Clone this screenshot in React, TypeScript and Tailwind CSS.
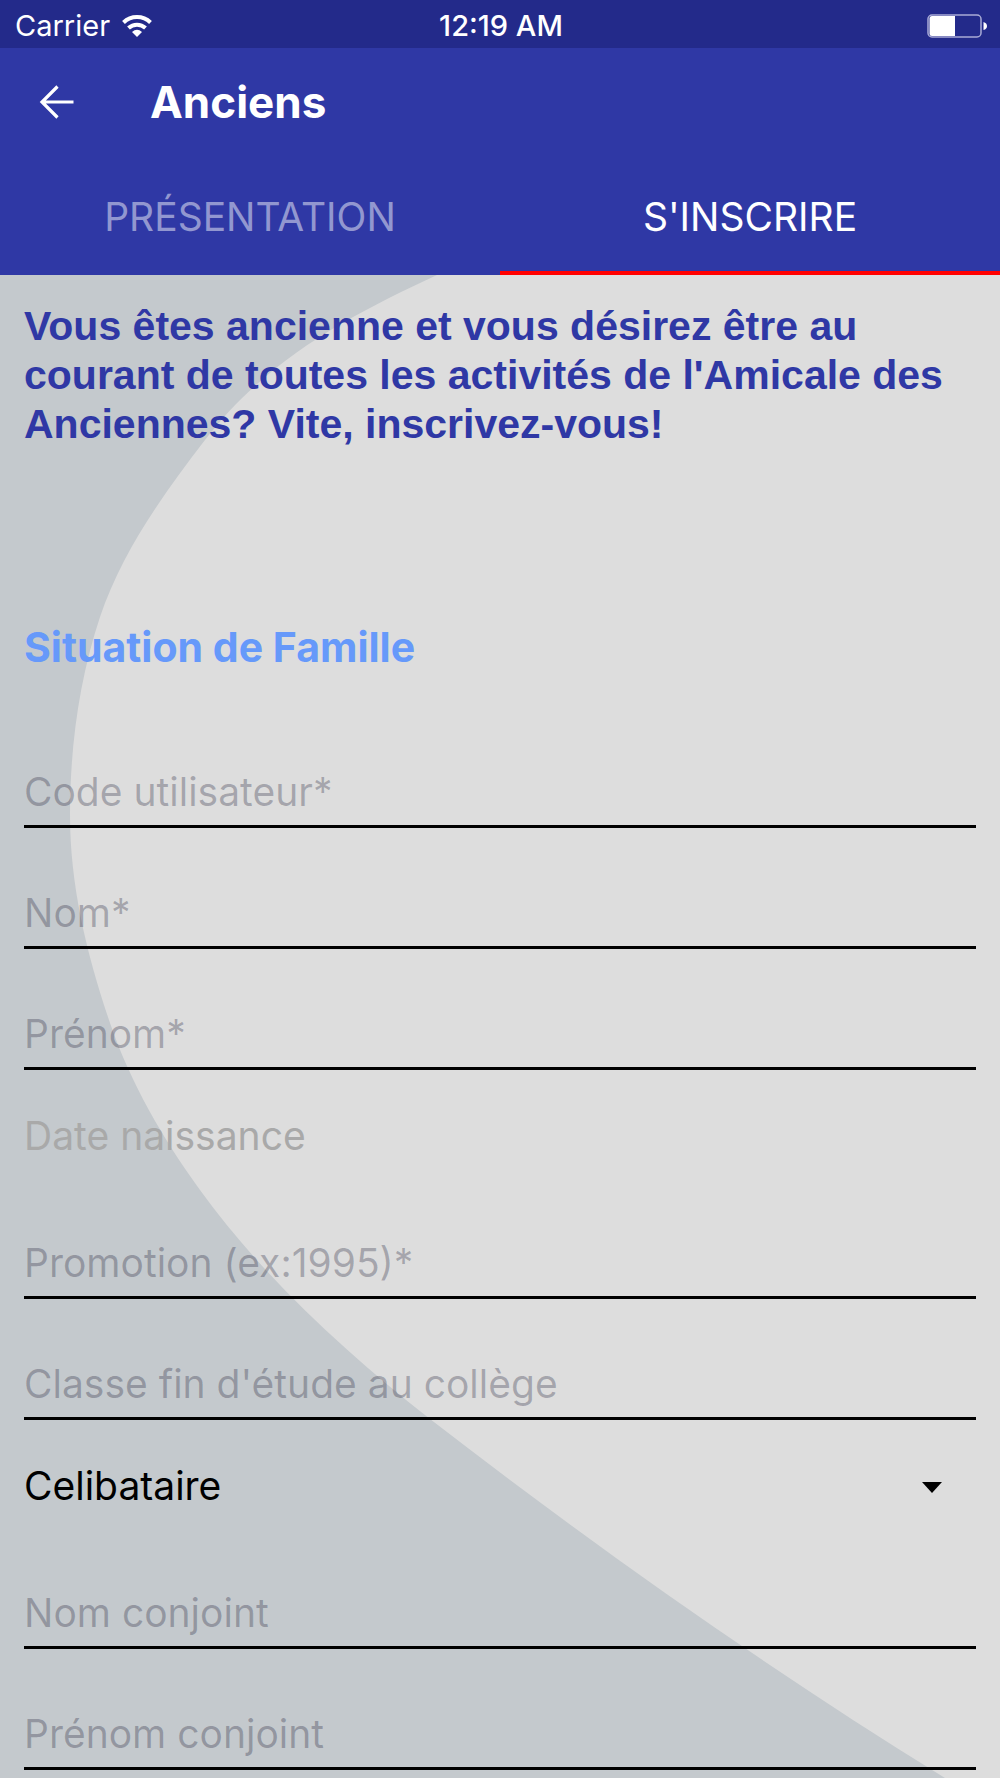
import { useState } from 'react'

type Tab = 'presentation' | 'inscription'

const tabs: { id: Tab; label: string }[] = [
  { id: 'presentation', label: 'PRÉSENTATION' },
  { id: 'inscription', label: "S'INSCRIRE" },
]

const situations = ['Celibataire', 'Marié(e)', 'Divorcé(e)', 'Veuf(ve)']

function StatusBar() {
  return (
    <div className="h-12 pt-1 pl-[15px] pr-[13px] grid grid-cols-3 items-center bg-[#232a8a] text-white">
      <div className="flex items-center gap-3">
        <span className="text-[29px] leading-8">Carrier</span>
        <svg width="30" height="22" viewBox="0 0 30 22" fill="none" stroke="white" strokeWidth="4">
          <path d="M1.5 7.5A19.5 19.5 0 0 1 28.500 7.500" />
          <path d="M6.500 13A12.500 12.500 0 0 1 23.500 13" />
          <path d="M15 22L10 17Q15 12.500 20 17Z" fill="white" stroke="none" />
        </svg>
      </div>
      <span className="text-center text-[29px] leading-8 font-medium">12:19 AM</span>
      <svg className="justify-self-end" width="60" height="24" viewBox="0 0 60 24">
        <rect x="1" y="1" width="53" height="22" rx="4" fill="none" stroke="#a9abd6" strokeWidth="1.5" />
        <path d="M5 2H28V22H5Q2.500 22 2.500 19.500V4.500Q2.500 2 5 2Z" fill="white" />
        <path d="M56.500 8Q60 9 60 12T56.500 16Z" fill="white" />
      </svg>
    </div>
  )
}

function Field({ id, label }: { id: string; label: string }) {
  return (
    <div className="pt-[54px]">
      <input id={id} type="text" aria-label={label} placeholder={label} className="block w-full h-[67px] pb-1 border-b-3 border-black bg-transparent text-[39px] text-black placeholder-[#00001942] outline-none" />
    </div>
  )
}

export default function App() {
  const [tab, setTab] = useState<Tab>('inscription')
  const [situation, setSituation] = useState(situations[0])

  return (
    <div className="min-h-screen flex flex-col font-['Inter','Liberation_Sans',sans-serif]">
      <header className="bg-[#2f38a5] text-white">
        <StatusBar />
        <div className="h-[108px] flex items-center pl-[38px]">
          <button type="button" aria-label="Retour" className="w-28">
            <svg width="38" height="36" viewBox="0 0 38 36" fill="none" stroke="white" strokeWidth="3.200">
              <path d="M19.500 2.500L4 18L19.500 33.500M4 18H35.500" />
            </svg>
          </button>
          <h1 className="text-[44px] font-bold">Anciens</h1>
        </div>
        <div role="tablist" className="grid grid-cols-2">
          {tabs.map(t => (
            <button
              key={t.id}
              type="button"
              role="tab"
              aria-selected={tab === t.id}
              onClick={() => setTab(t.id)}
              className={`h-[119px] pt-2 border-b-4 text-[39px] ${tab === t.id ? 'border-[#ff0000] text-white' : 'border-transparent text-[#9297d0]'}`}
            >
              {t.label}
            </button>
          ))}
        </div>
      </header>

      <main className="relative flex-1 overflow-hidden bg-[#c4c9cd]">
        <svg className="absolute inset-0 w-full h-full" viewBox="0 275 1000 1503" preserveAspectRatio="xMidYMin slice" aria-hidden="true">
          <path
            fill="#dddddd"
            d="M437 275C351 315 268 358 205 440C162 496 122 552 100 617C79 680 70 748 70 815C70 886 87 955 110 1023C130 1082 163 1139 200 1190C263 1277 346 1353 430 1419C594 1546 767 1668 945 1778H1000V275Z"
          />
        </svg>

        <form className="relative px-6 pt-[27px]">
          <p className="font-['Liberation_Sans',Arial,sans-serif] text-[41px] leading-[49px] font-bold text-[#2f38a5]">
            Vous êtes ancienne et vous désirez être au courant de toutes les activités de l'Amicale des Anciennes? Vite, inscrivez-vous!
          </p>
          <h2 className="mt-[174px] mb-9 text-[41px] leading-[48px] font-bold text-[#6699fa]">Situation de Famille</h2>

          <Field id="code" label="Code utilisateur*" />
          <Field id="nom" label="Nom*" />
          <Field id="prenom" label="Prénom*" />
          <button type="button" className="block w-full h-[108px] pt-7 pb-1 text-left text-[39px] leading-[76px] text-[#a9a9a9]">Date naissance</button>
          <Field id="promotion" label="Promotion (ex:1995)*" />
          <Field id="classe" label="Classe fin d'étude au collège" />
          <div className="relative h-[108px] pt-7">
            <select id="situation" aria-label="Situation de famille" value={situation} onChange={e => setSituation(e.target.value)} className="block w-full h-[76px] appearance-none bg-transparent text-[39px] text-black outline-none">
              {situations.map(s => <option key={s}>{s}</option>)}
            </select>
            <svg className="absolute right-[34px] top-[62px] pointer-events-none" width="20" height="11" viewBox="0 0 20 11">
              <path d="M0 0H20L10 11Z" />
            </svg>
          </div>
          <Field id="nom-conjoint" label="Nom conjoint" />
          <Field id="prenom-conjoint" label="Prénom conjoint" />
        </form>
      </main>
    </div>
  )
}
